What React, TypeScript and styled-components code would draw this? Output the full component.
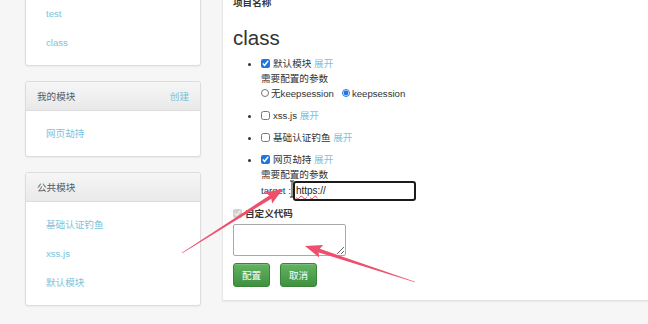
import styled, { createGlobalStyle } from "styled-components"

const GlobalStyle = createGlobalStyle`
  html, body {
    margin: 0;
    padding: 0;
    overflow: hidden;
    background: #f6f6f6;
  }
  body {
    font-family: "Liberation Sans", "Noto Sans CJK SC", sans-serif;
    font-size: 9.6px;
    color: #333;
  }
`

interface Arrow {
  tail: [number, number]
  tip: [number, number]
}

// tapered red arrows drawn over the screenshot
const arrowPoints = ({ tail, tip }: Arrow) => {
  const dx = tip[0] - tail[0]
  const dy = tip[1] - tail[1]
  const len = Math.hypot(dx, dy)
  const ux = dx / len
  const uy = dy / len
  const px = -uy
  const py = ux
  const headLen = 15
  const bx = tip[0] - ux * headLen
  const by = tip[1] - uy * headLen
  const p = (x: number, y: number, k: number) => `${x + px * k},${y + py * k}`
  return [
    p(tail[0], tail[1], 0.3),
    p(bx, by, 1.9),
    p(bx - ux * 2, by - uy * 2, 6.5),
    `${tip[0]},${tip[1]}`,
    p(bx - ux * 2, by - uy * 2, -6.5),
    p(bx, by, -1.9),
    p(tail[0], tail[1], -0.3),
  ].join(" ")
}

const arrows: Arrow[] = [
  { tail: [182, 253], tip: [283, 189] },
  { tail: [415, 282], tip: [305, 246] },
]

const sideCards = [
  { title: "我的项目", items: ["test", "class"] },
  { title: "我的模块", action: "创建", items: ["网页劫持"] },
  { title: "公共模块", items: ["基础认证钓鱼", "xss.js", "默认模块"] },
]

const App = () => {
  return (
    <Root>
      <GlobalStyle />
      <Page>
        <Sidebar>
          {sideCards.map((card) => (
            <Card key={card.title}>
              <CardHeader>
                <span>{card.title}</span>
                {card.action && <HeaderLink href="#">{card.action}</HeaderLink>}
              </CardHeader>
              <CardBody>
                {card.items.map((item) => (
                  <CardLink key={item} href="#">{item}</CardLink>
                ))}
              </CardBody>
            </Card>
          ))}
        </Sidebar>

        <Panel>
          <FieldLabel>项目名称</FieldLabel>
          <Title>class</Title>

          <ModuleList>
            <ModuleItem>
              <Line>
                <Check type="checkbox" defaultChecked />
                默认模块 <Expand href="#">展开</Expand>
              </Line>
              <Line>需要配置的参数</Line>
              <Line>
                <RadioLabel>
                  <Radio type="radio" name="ks" />无keepsession
                </RadioLabel>
                <RadioLabel>
                  <Radio type="radio" name="ks" defaultChecked />keepsession
                </RadioLabel>
              </Line>
            </ModuleItem>
            <ModuleItem>
              <Line>
                <Check type="checkbox" />
                xss.js <Expand href="#">展开</Expand>
              </Line>
            </ModuleItem>
            <ModuleItem>
              <Line>
                <Check type="checkbox" />
                基础认证钓鱼 <Expand href="#">展开</Expand>
              </Line>
            </ModuleItem>
            <ModuleItem>
              <Line>
                <Check type="checkbox" defaultChecked />
                网页劫持 <Expand href="#">展开</Expand>
              </Line>
              <Line>需要配置的参数</Line>
              <TargetRow>
                target :
                <FakeInput>
                  <Squiggle>https</Squiggle>://
                </FakeInput>
              </TargetRow>
            </ModuleItem>
          </ModuleList>

          <CustomRow>
            <Check type="checkbox" defaultChecked disabled />
            自定义代码
          </CustomRow>
          <CodeArea />

          <ButtonRow>
            <GreenButton>配置</GreenButton>
            <GreenButton>取消</GreenButton>
          </ButtonRow>
        </Panel>
      </Page>

      <Annotations width="648" height="324" viewBox="0 0 648 324">
        {arrows.map((a, i) => (
          <polygon key={i} points={arrowPoints(a)} fill="#ee4f6c" />
        ))}
        <path d="M290 181h4M292 181v16M290 197h4" stroke="#222" strokeWidth="1" fill="none" />
      </Annotations>
    </Root>
  )
}

const Root = styled.div`
  position: relative;
  height: 324px;
  overflow: hidden;
`

const Page = styled.div`
  display: flex;
  align-items: flex-start;
  gap: 21px;
  margin-top: -39px;
  padding-left: 25px;
`

const Sidebar = styled.div`
  width: 176px;
  flex: none;
  display: flex;
  flex-direction: column;
  gap: 15px;
`

const Card = styled.div`
  background: #fff;
  border: 1px solid #dcdcdc;
  border-radius: 3px;
  box-shadow: 0 1px 2px rgba(0, 0, 0, 0.05);
`

const CardHeader = styled.div`
  height: 28px;
  padding: 0 11px;
  display: flex;
  align-items: center;
  justify-content: space-between;
  color: #4f5b66;
  background: linear-gradient(#f6f6f6, #e9e9e9);
  border-bottom: 1px solid #dddddd;
  border-radius: 3px 3px 0 0;
`

const HeaderLink = styled.a`
  color: #7cc3dc;
  text-decoration: none;
`

const CardBody = styled.div`
  padding: 8px 0;
  display: flex;
  flex-direction: column;
`

const CardLink = styled.a`
  height: 29px;
  line-height: 29px;
  padding-left: 20px;
  color: #7cc3dc;
  text-decoration: none;
`

const Panel = styled.div`
  width: 470px;
  flex: none;
  background: #fff;
  border-left: 1px solid #e8e8e8;
  border-bottom: 1px solid #e2e2e2;
  box-shadow: 0 1px 2px rgba(0, 0, 0, 0.05);
  padding: 36px 0 13px 10px;
`

const FieldLabel = styled.div`
  font-weight: bold;
  line-height: 12px;
`

const Title = styled.h1`
  font-size: 20.5px;
  line-height: 24px;
  font-weight: normal;
  margin: 17px 0 0;
`

const ModuleList = styled.ul`
  margin: 5.5px 0 5px;
  padding-left: 28px;
  list-style: disc;
`

const ModuleItem = styled.li`
  line-height: 15px;
  margin-bottom: 7px;
  &:last-child {
    margin-bottom: 0;
  }
`

const Line = styled.div`
  display: flex;
  align-items: center;
  height: 15px;
  white-space: pre;
`

const Check = styled.input`
  width: 9px;
  height: 9px;
  margin: 0 3px 0 0;
  accent-color: #1f76e0;
`

const Expand = styled.a`
  color: #7cc3dc;
  text-decoration: none;
`

const RadioLabel = styled.label`
  display: flex;
  align-items: center;
  margin-right: 8px;
`

const Radio = styled.input`
  width: 8px;
  height: 8px;
  margin: 0 2px 0 0;
  accent-color: #1f76e0;
`

const TargetRow = styled.div`
  display: flex;
  align-items: center;
  height: 20px;
  margin-top: -1px;
  white-space: pre;
`

const FakeInput = styled.div`
  box-sizing: border-box;
  width: 123px;
  height: 20px;
  margin-left: 2px;
  padding-left: 1px;
  border: 2px solid #1b1b1b;
  border-radius: 3px;
  display: flex;
  align-items: center;
  font-size: 10px;
  line-height: 12px;
  color: #222;
`

const Squiggle = styled.span`
  text-decoration: underline wavy #e04848;
  text-decoration-thickness: 1px;
  text-underline-offset: 1px;
`

const CustomRow = styled.div`
  display: flex;
  align-items: center;
  height: 15px;
  font-weight: bold;
`

const CodeArea = styled.textarea`
  display: block;
  box-sizing: border-box;
  width: 113px;
  height: 32px;
  margin-top: 3.5px;
  border: 1px solid #a9a9a9;
  border-radius: 2px;
  resize: both;
`

const ButtonRow = styled.div`
  display: flex;
  gap: 10px;
  margin-top: 7px;
`

const GreenButton = styled.button`
  width: 37px;
  height: 24px;
  padding: 0;
  font-family: inherit;
  font-size: 9.6px;
  color: #fff;
  background: linear-gradient(#62b462, #3f903f);
  border: 1px solid #3a843a;
  border-radius: 3px;
  box-shadow: inset 0 1px 0 rgba(255, 255, 255, 0.15);
`

const Annotations = styled.svg`
  position: absolute;
  top: 0;
  left: 0;
  pointer-events: none;
`

export default App
